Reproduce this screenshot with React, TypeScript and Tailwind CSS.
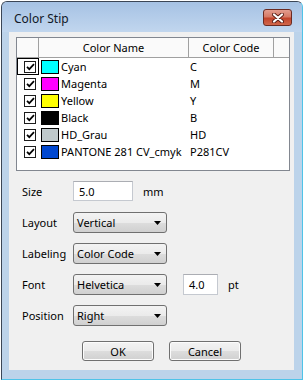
const rows = [
  { name: "Cyan", code: "C", color: "#00ffff" },
  { name: "Magenta", code: "M", color: "#ff00ff" },
  { name: "Yellow", code: "Y", color: "#ffff00" },
  { name: "Black", code: "B", color: "#000000" },
  { name: "HD_Grau", code: "HD", color: "#bfc9cb" },
  { name: "PANTONE 281 CV_cmyk", code: "P281CV", color: "#0047d0" },
];

function Check() {
  return (
    <span className="w-[12px] h-[12px] border border-[#1c1c1c] bg-white flex items-center justify-center">
      <svg width="9" height="8" viewBox="0 0 9 8">
        <path d="M1 3.8 L3.3 6.2 L8 1.2" fill="none" stroke="#000" strokeWidth="1.7" />
      </svg>
    </span>
  );
}

function Select({ value }: { value: string }) {
  return (
    <div className="w-[94px] h-[21px] rounded-[3px] border border-[#707070] bg-[linear-gradient(#f3f3f3_0%,#ebebeb_50%,#dddddd_51%,#d0d0d0_100%)] flex items-center justify-between pl-[3px] pr-[5px]">
      <span>{value}</span>
      <svg width="7" height="4" viewBox="0 0 7 4">
        <path d="M0 0 H7 L3.5 4 Z" fill="#000" />
      </svg>
    </div>
  );
}

function Field({ value, w, h }: { value: string; w: string; h: string }) {
  return (
    <div className={`${w} ${h} bg-white border border-[#c5c9d0] border-t-[#abadb3] flex items-center pl-[5px]`}>
      {value}
    </div>
  );
}

function Button({ label }: { label: string }) {
  return (
    <div className="w-[72px] h-[20px] rounded-[3px] border border-[#707070] bg-[linear-gradient(#f3f3f3_0%,#ebebeb_50%,#dddddd_51%,#d0d0d0_100%)] shadow-[inset_0_0_0_1px_#fcfcfc] flex items-center justify-center">
      {label}
    </div>
  );
}

export default function App() {
  return (
    <div
      className="w-[304px] h-[381px] bg-white pl-px pt-px text-[11px] leading-none text-black"
      style={{ fontFamily: '"Noto Sans", "Open Sans", sans-serif' }}
    >
      <div className="w-[302px] h-[379px] rounded-t-[6px] border border-[#3b4656] border-r-[#4fc3e8] border-b-[#4fc3e8] bg-[#bcd3ea] flex flex-col">
        {/* Title bar */}
        <div className="h-[30px] rounded-t-[5px] bg-[linear-gradient(#a6c2e4,#c1d6ee)] flex items-center justify-between pl-[12px] pr-[10px]">
          <span className="text-[12px] text-[#111827] pt-[3px]">Color Stip</span>
          <div className="w-[29px] h-[17px] mt-[1px] rounded-[3px] border border-[#6b2b22] bg-[linear-gradient(#e39d8f_0%,#d67a66_45%,#c2442c_55%,#d0664a_100%)] flex items-center justify-center">
            <svg width="12" height="10" viewBox="0 0 12 10">
              <path d="M2 1.5 L10 8.5 M10 1.5 L2 8.5" stroke="#5a1f17" strokeWidth="4" strokeLinecap="round" />
              <path d="M2 1.5 L10 8.5 M10 1.5 L2 8.5" stroke="#ffffff" strokeWidth="2.2" strokeLinecap="round" />
            </svg>
          </div>
        </div>

        {/* Client area */}
        <div className="ml-[7px] mr-[8px] h-[338px] bg-[#f0f0f0] flex flex-col">
          {/* List view */}
          <div className="ml-[7px] mt-[5px] w-[274px] h-[134px] border border-[#828790] bg-white flex flex-col">
            <div className="h-[20px] flex bg-[#fafafa] border-b border-[#a0a0a0]">
              <div className="w-[22px] border-r border-[#a0a0a0]" />
              <div className="w-[150px] border-r border-[#a0a0a0] flex items-center justify-center">Color Name</div>
              <div className="w-[85px] border-r border-[#a0a0a0] flex items-center justify-center">Color Code</div>
            </div>
            {rows.map((r, i) => (
              <div key={r.name} className="h-[17px] flex items-center">
                <div
                  className={`w-[22px] h-[17px] flex items-center pl-[6px] border ${
                    i === 0 ? "border-black" : "border-transparent"
                  }`}
                >
                  <Check />
                </div>
                <div className="w-[150px] flex items-center pl-[2px]">
                  <span className="w-[18px] h-[14px] border border-black shrink-0" style={{ background: r.color }} />
                  <span className="ml-[2px] whitespace-nowrap">{r.name}</span>
                </div>
                <div className="pl-[1px]">{r.code}</div>
              </div>
            ))}
          </div>

          {/* Form */}
          <div className="mt-[10px] flex items-center">
            <span className="w-[64px] pl-[13px]">Size</span>
            <Field value="5.0" w="w-[60px]" h="h-[20px]" />
            <span className="ml-[10px]">mm</span>
          </div>
          <div className="mt-[11px] flex flex-col gap-[10px]">
            <div className="flex items-center">
              <span className="w-[64px] pl-[13px]">Layout</span>
              <Select value="Vertical" />
            </div>
            <div className="flex items-center">
              <span className="w-[64px] pl-[13px]">Labeling</span>
              <Select value="Color Code" />
            </div>
            <div className="flex items-center">
              <span className="w-[64px] pl-[13px]">Font</span>
              <Select value="Helvetica" />
              <div className="ml-[16px]">
                <Field value="4.0" w="w-[35px]" h="h-[21px]" />
              </div>
              <span className="ml-[10px]">pt</span>
            </div>
            <div className="flex items-center">
              <span className="w-[64px] pl-[13px]">Position</span>
              <Select value="Right" />
            </div>
          </div>

          <div className="mt-[15px] ml-[73px] flex gap-[15px]">
            <Button label="OK" />
            <Button label="Cancel" />
          </div>
        </div>
      </div>
    </div>
  );
}
